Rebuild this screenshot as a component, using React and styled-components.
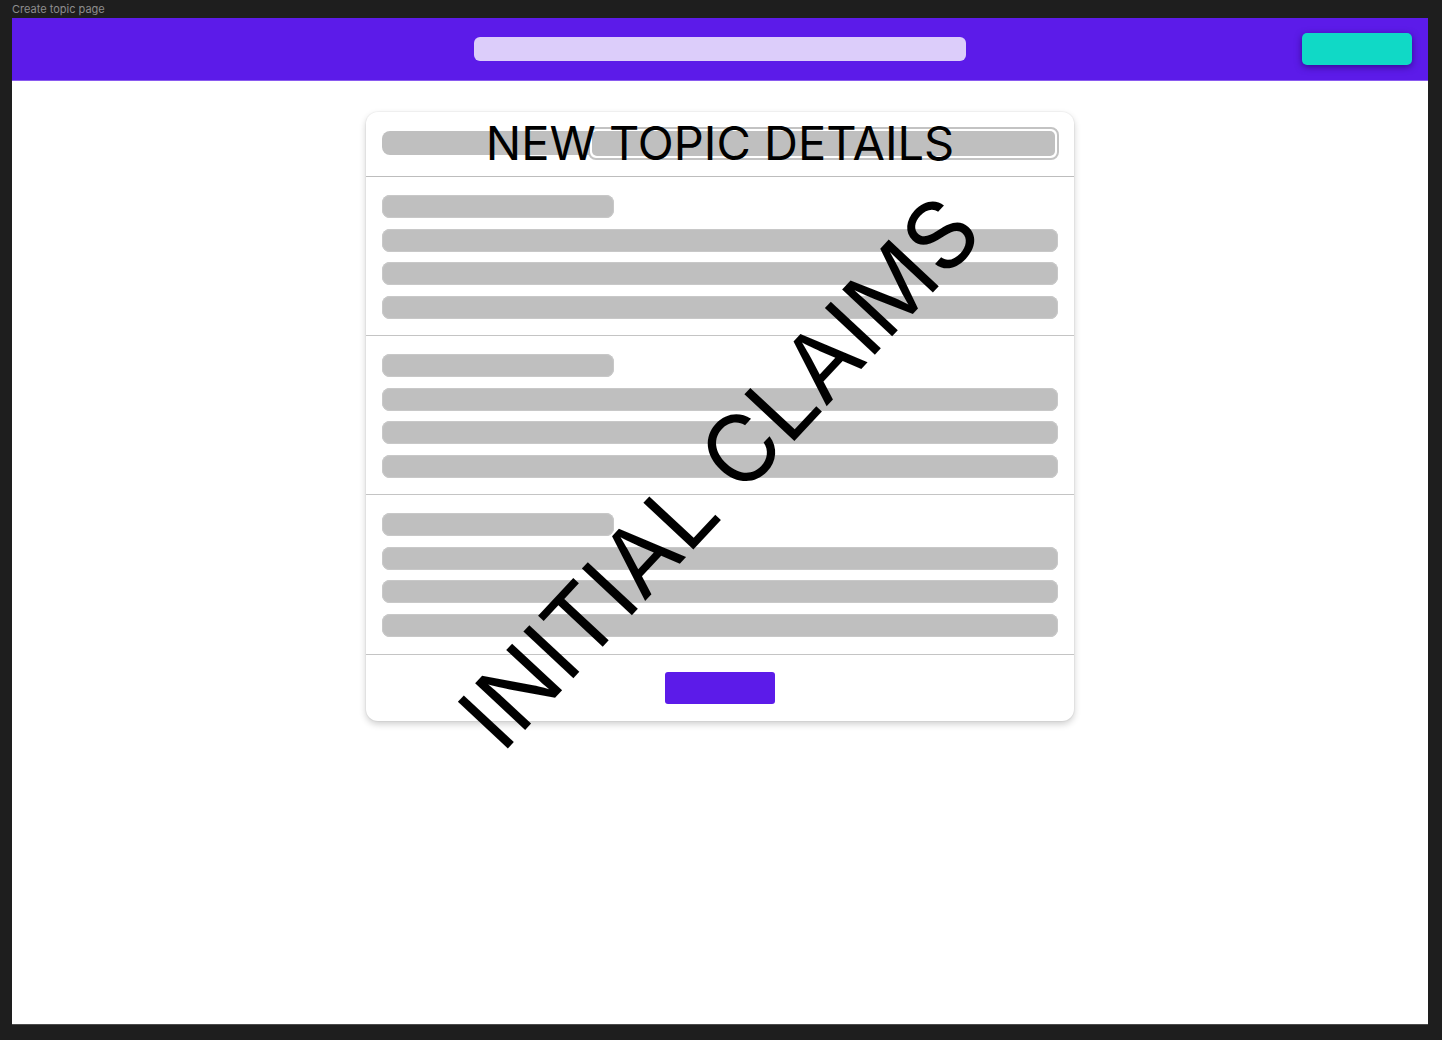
import React from "react";
import styled, { createGlobalStyle } from "styled-components";

const Global = createGlobalStyle`
  html, body {
    margin: 0;
    padding: 0;
    background: #1e1e1e;
    font-family: Inter, "Noto Sans", sans-serif;
  }
  * { box-sizing: border-box; }
`;

const Canvas = styled.div`
  width: 1442px;
  height: 1040px;
  padding: 0 14px 16px 12px;
  display: flex;
  flex-direction: column;
`;

const FrameLabel = styled.div`
  height: 18px;
  font-size: 11px;
  line-height: 18px;
  color: #8d8d8d;
  white-space: nowrap;
`;

const Frame = styled.div`
  width: 1416px;
  height: 1006px;
  background: #ffffff;
  display: flex;
  flex-direction: column;
  align-items: center;
  box-shadow: 0 1px 0 #4b4b4b;
`;

const TopBar = styled.header`
  align-self: stretch;
  height: 63px;
  background: #5c1be9;
  border-bottom: 1px solid #8a5af0;
  display: grid;
  grid-template-columns: 1fr 492px 1fr;
  align-items: center;
`;

const SearchField = styled.div`
  grid-column: 2;
  height: 24px;
  border-radius: 6px;
  background: #dccdfa;
`;

const AccentButton = styled.div`
  grid-column: 3;
  justify-self: end;
  width: 110px;
  height: 32px;
  margin-right: 16px;
  border-radius: 5px;
  background: #10d9c6;
  box-shadow: 0 2px 7px rgba(35, 0, 110, 0.7);
`;

const Card = styled.section`
  position: relative;
  margin-top: 31px;
  width: 708px;
  background: #ffffff;
  border-radius: 12px;
  box-shadow: 0 0 0 1px rgba(0, 0, 0, 0.03), 0 3px 7px rgba(0, 0, 0, 0.2);
  display: flex;
  flex-direction: column;
`;

const CardHead = styled.div`
  position: relative;
  height: 65px;
  padding: 0 15px 2px 16px;
  display: flex;
  align-items: center;
  border-bottom: 1px solid #bdbdbd;
`;

const HeadBar = styled.div`
  width: 220px;
  height: 24px;
  border-radius: 8px;
  background: #bfbfbf;
  margin-right: -14px;
`;

const HeadInput = styled.div`
  flex: 1;
  height: 33px;
  border: 2px solid #c3c3c3;
  border-radius: 8px;
  padding: 2px;
  background: #ffffff;

  &::after {
    content: "";
    display: block;
    height: 100%;
    border-radius: 5px;
    background: #bfbfbf;
  }
`;

const Title = styled.h1`
  position: absolute;
  left: 0;
  right: 0;
  top: 2px;
  margin: 0;
  text-align: center;
  font-family: Inter, sans-serif;
  font-weight: 400;
  font-size: 47px;
  line-height: 58px;
  color: #000000;
  pointer-events: none;
`;

const Group = styled.div`
  height: ${(p) => (p.$last ? "160px" : "159px")};
  padding: 18px 16px 0 16px;
  display: flex;
  flex-direction: column;
  gap: 10.5px;
  border-bottom: 1px solid #c4c4c4;
`;

const Bar = styled.div`
  width: ${(p) => (p.$short ? "232px" : "100%")};
  height: 23px;
  border-radius: 8px;
  background: #bfbfbf;
  box-shadow: inset 0 0 0 1px #c8c8c8;
`;

const CardFoot = styled.div`
  height: 66px;
  padding-top: 17px;
  display: flex;
  justify-content: center;
  align-items: flex-start;
`;

const SubmitButton = styled.div`
  width: 110px;
  height: 32px;
  border-radius: 3px;
  background: #5c1be9;
`;

const Stamp = styled.div`
  position: absolute;
  left: 353px;
  top: 360px;
  transform: translate(-50%, -50%) rotate(-47deg);
  font-family: Inter, sans-serif;
  font-weight: 400;
  font-size: 94px;
  line-height: 1;
  white-space: nowrap;
  color: #000000;
  pointer-events: none;
`;

const groups = [0, 1, 2];

export default function App() {
  return (
    <>
      <Global />
      <Canvas>
        <FrameLabel>Create topic page</FrameLabel>
        <Frame>
          <TopBar>
            <SearchField />
            <AccentButton />
          </TopBar>
          <Card>
            <CardHead>
              <HeadBar />
              <HeadInput />
              <Title>NEW TOPIC DETAILS</Title>
            </CardHead>
            {groups.map((g) => (
              <Group key={g} $last={g === groups.length - 1}>
                <Bar $short />
                <Bar />
                <Bar />
                <Bar />
              </Group>
            ))}
            <CardFoot>
              <SubmitButton />
            </CardFoot>
            <Stamp>INITIAL CLAIMS</Stamp>
          </Card>
        </Frame>
      </Canvas>
    </>
  );
}
